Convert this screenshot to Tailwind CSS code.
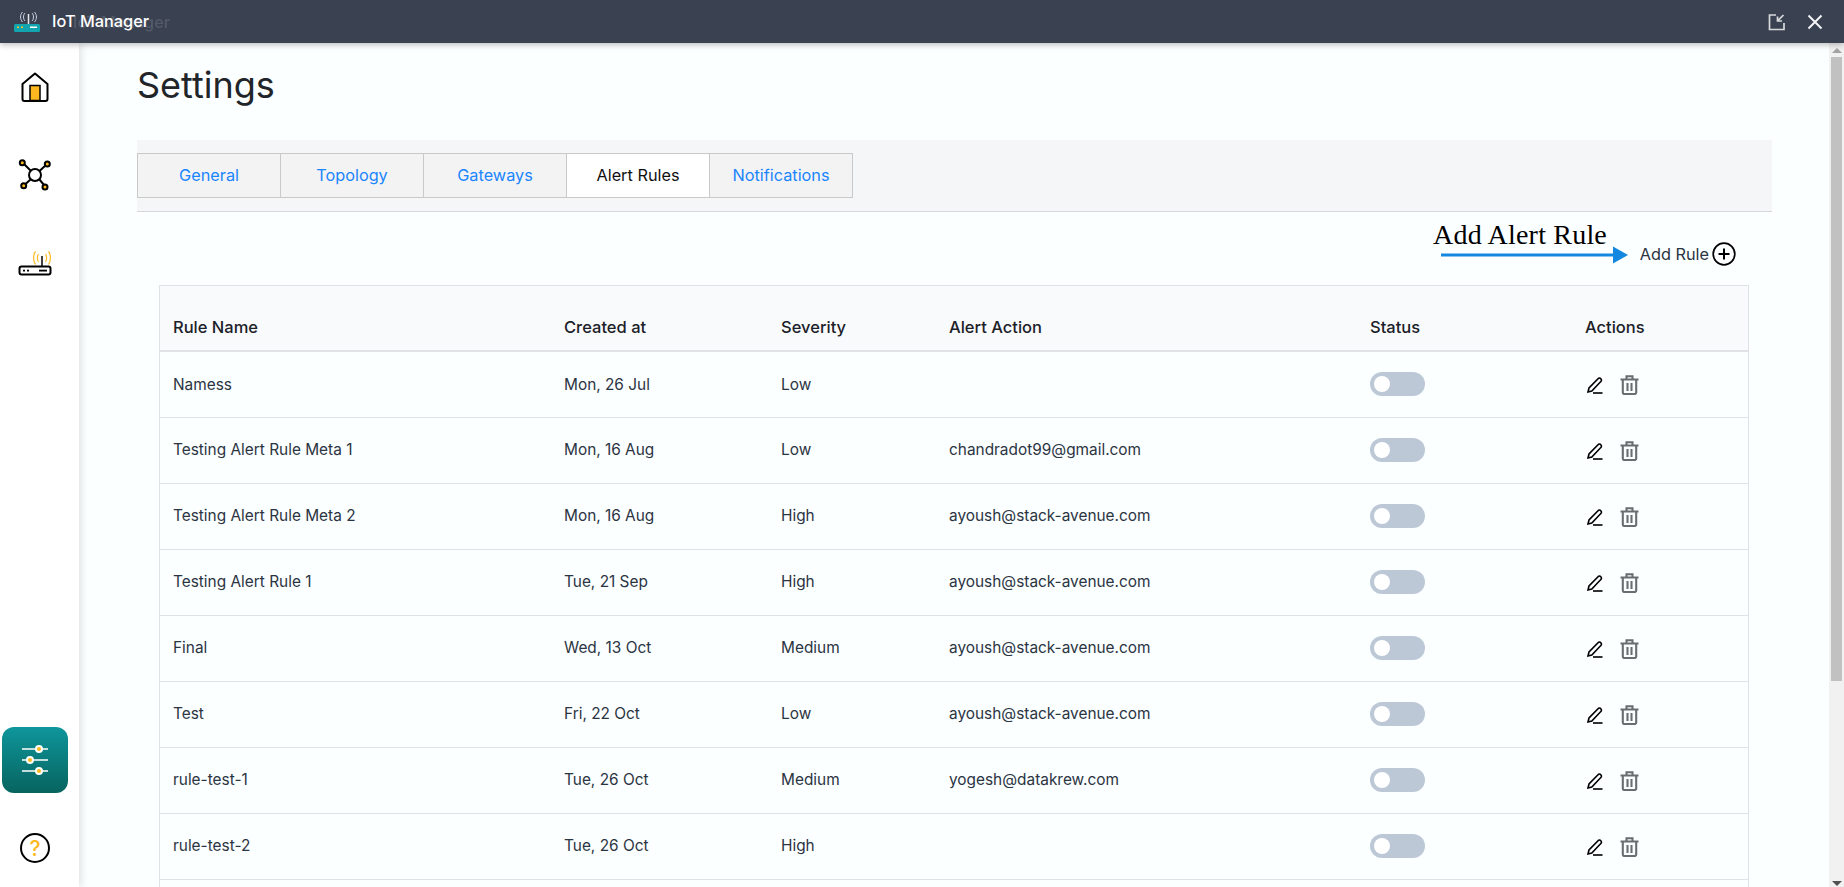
<!DOCTYPE html>
<html lang="en">
<head>
  <meta charset="UTF-8">
  <title>IoT Manager</title>
  <script src="https://cdn.jsdelivr.net/npm/@tailwindcss/browser@4"></script>
</head>
<body class="h-[887px] overflow-hidden bg-[#fbffff] font-['Inter',sans-serif]">
  <!-- Title bar -->
  <header class="relative z-20 flex h-[43px] items-center justify-between bg-[#3a4150] pl-[13px] pr-[20px] shadow-[0_2px_6px_rgba(0,0,0,0.25)]">
    <div class="relative flex items-center gap-[11px]">
      <svg width="28" height="22" viewBox="0 0 28 22" fill="none">
        <path d="M12 2c-2 2-2 6 0 8M9.500 1c-2.600 3-2.600 7 0 10M19 2c2 2 2 6 0 8M21.500 1c2.600 3 2.600 7 0 10" stroke="#cbd5e1" stroke-width="1"/>
        <path d="M15.500 3v11" stroke="#e5e7eb" stroke-width="1.500"/>
        <rect x="1" y="13" width="26" height="8" rx="1.500" fill="#12a5b0"/>
        <rect x="4" y="15.500" width="2" height="1.500" fill="#fbbf24"/>
        <rect x="8" y="15.500" width="2" height="1.500" fill="#fbbf24"/>
        <rect x="17" y="15.500" width="7" height="1.500" fill="#fff"/>
      </svg>
      <span class="absolute left-[60px] top-[1px] whitespace-nowrap text-[16.3px] font-medium text-[#535a68] blur-[0.5px]">IoT Manager</span>
      <span class="relative text-[16.3px] font-medium text-white">IoT Manager</span>
    </div>
    <div class="flex items-center gap-[19px]">
      <svg width="20" height="20" viewBox="0 0 20 20" fill="none" stroke="#d8dadc" stroke-width="1.700">
        <path d="M9 3H2.500v14.500H17V11"/>
        <path d="M16.500 3 10.500 9M10.500 4.500V9H15"/>
      </svg>
      <svg width="18" height="18" viewBox="0 0 18 18" fill="none" stroke="#f3f4f6" stroke-width="2">
        <path d="M2.500 2.500 15.500 15.500M15.500 2.500 2.500 15.500"/>
      </svg>
    </div>
  </header>

  <div class="flex h-[844px]">
    <!-- Sidebar -->
    <aside class="z-10 flex w-[79px] shrink-0 flex-col items-center bg-white pr-[9px] shadow-[2px_0_8px_rgba(0,0,0,0.12)]">
      <svg class="mt-[29px]" width="28" height="30" viewBox="0 0 28 30" fill="none">
        <path d="M1.500 12 14 1.500 26.500 12v15a2 2 0 0 1-2 2h-21a2 2 0 0 1-2-2z" stroke="#000" stroke-width="2" stroke-linejoin="round"/>
        <rect x="9" y="13.500" width="10" height="15" fill="#fbb91f" stroke="#000" stroke-width="1.500"/>
      </svg>
      <svg class="mt-[56px]" width="34" height="34" viewBox="0 0 34 34" fill="none" stroke="#000" stroke-width="2">
        <circle cx="17" cy="17" r="6"/>
        <path d="M12.500 12.500 6 6M21.500 13 28 7M12.500 21.500 7 26.500M21.500 21.500 26 27"/>
        <circle cx="4.300" cy="4.700" r="2.500" fill="#fbb91f"/>
        <circle cx="29.300" cy="6" r="2.500" fill="#fbb91f"/>
        <circle cx="5.700" cy="27.700" r="2.500" fill="#fbb91f"/>
        <circle cx="27" cy="29" r="2.500" fill="#fbb91f"/>
      </svg>
      <svg class="mt-[58px]" width="34" height="26" viewBox="0 0 34 26" fill="none">
        <path d="M20.500 4c-1.500 2-1.500 6 0 8M17.500 1.500c-2.500 3-2.500 10 0 13M27.500 4c1.500 2 1.500 6 0 8M30.500 1.500c2.500 3 2.500 10 0 13" stroke="#fbb91f" stroke-width="1.200"/>
        <path d="M24 6v11" stroke="#000" stroke-width="1.500"/>
        <rect x="1.500" y="16.500" width="31" height="8" rx="2" fill="#fff" stroke="#000" stroke-width="2"/>
        <rect x="5" y="19.700" width="2" height="1.800" fill="#000"/>
        <rect x="9" y="19.700" width="2" height="1.800" fill="#000"/>
        <rect x="21" y="19.700" width="8" height="1.800" fill="#000"/>
      </svg>
      <div class="mt-auto flex h-[66px] w-[66px] items-center justify-center rounded-[12px] bg-gradient-to-b from-[#0f969c] to-[#07645f]">
        <svg width="28" height="30" viewBox="0 0 28 30" fill="none">
          <path d="M1 4h26M1 15h26M1 26h26" stroke="#fff" stroke-width="1.500"/>
          <circle cx="18" cy="4" r="3" fill="#fbb91f" stroke="#fff" stroke-width="2"/>
          <circle cx="9" cy="15" r="3" fill="#fbb91f" stroke="#fff" stroke-width="2"/>
          <circle cx="18" cy="26" r="3" fill="#fbb91f" stroke="#fff" stroke-width="2"/>
        </svg>
      </div>
      <div class="mt-[40px] mb-[24px] flex h-[30px] w-[30px] items-center justify-center rounded-full border-2 border-black text-[21px] font-medium leading-none text-[#fbb91f]">?</div>
    </aside>

    <!-- Main -->
    <main class="min-w-0 flex-1 overflow-hidden pl-[58px] pr-[57px]">
      <h1 class="mt-[19px] h-[47px] text-[36px] leading-[47px] font-normal text-[#212529]">Settings</h1>

      <div class="mt-[31px] flex h-[72px] items-start border-b border-[#d5d8da] bg-[#f4f6f7] pt-[13px]">
        <nav class="flex h-[45px] border border-[#c9c9c9] text-[16.3px]">
          <a class="flex w-[143px] items-center justify-center border-r border-[#c9c9c9] bg-[#f3f3f3] text-[#1a85ff]">General</a>
          <a class="flex w-[143px] items-center justify-center border-r border-[#c9c9c9] bg-[#f3f3f3] text-[#1a85ff]">Topology</a>
          <a class="flex w-[143px] items-center justify-center border-r border-[#c9c9c9] bg-[#f3f3f3] text-[#1a85ff]">Gateways</a>
          <a class="flex w-[143px] items-center justify-center border-r border-[#c9c9c9] bg-white text-[#111]">Alert Rules</a>
          <a class="flex w-[142px] items-center justify-center bg-[#f3f3f3] text-[#1a85ff]">Notifications</a>
        </nav>
      </div>

      <!-- Add rule -->
      <div class="relative flex h-[73px] items-start justify-end pr-[36px] pt-[30px]">
        <span class="absolute right-[165px] top-[7px] whitespace-nowrap font-['Liberation_Serif',serif] text-[28px] leading-[32px] tracking-[0.2px] text-black">Add Alert Rule</span>
        <svg class="absolute right-[142px] top-[34px]" width="190" height="18" viewBox="0 0 190 18">
          <path d="M1 9h175" stroke="#1488e0" stroke-width="3"/>
          <path d="M173 0.500l15 8.500-15 8.500z" fill="#1488e0"/>
        </svg>
        <span class="text-[16.3px] leading-[24px] text-[#2b3442]">Add Rule</span>
        <svg class="ml-[3px]" width="24" height="24" viewBox="0 0 24 24" fill="none" stroke="#000" stroke-width="1.700">
          <circle cx="12" cy="12" r="10.800"/>
          <path d="M12 6.500v11M6.500 12h11" stroke-width="2"/>
        </svg>
      </div>

      <!-- Rules table -->
      <div class="ml-[22px] mr-[23px] border border-[#e0e3e5]">
        <table class="w-full table-fixed border-collapse text-[15.4px] text-[#2b3442]">
          <colgroup>
            <col class="w-[391px]"><col class="w-[217px]"><col class="w-[168px]"><col class="w-[421px]"><col class="w-[215px]"><col>
          </colgroup>
          <thead class="bg-[#f8fafb] text-left text-[16.5px] text-[#1c2128]">
            <tr class="h-[65px] border-b-2 border-[#e0e3e5]">
              <th class="px-[13px] pt-[19px] font-medium">Rule Name</th>
              <th class="px-[13px] pt-[19px] font-medium">Created at</th>
              <th class="px-[13px] pt-[19px] font-medium">Severity</th>
              <th class="px-[13px] pt-[19px] font-medium">Alert Action</th>
              <th class="px-[13px] pt-[19px] font-medium">Status</th>
              <th class="px-[13px] pt-[19px] font-medium">Actions</th>
            </tr>
          </thead>
          <tbody id="rows"></tbody>
        </table>
      </div>
    </main>

    <!-- Scrollbar -->
    <div class="z-10 flex w-[15px] shrink-0 flex-col items-center bg-[#f1f1f1]">
      <div class="mt-[5px] h-0 w-0 border-x-[5px] border-b-[5px] border-x-transparent border-b-[#a3a3a3]"></div>
      <div class="mt-[4px] h-[624px] w-[11px] bg-[#c1c1c1]"></div>
      <div class="mt-auto mb-[1px] h-0 w-0 border-x-[5px] border-t-[5px] border-x-transparent border-t-[#505050]"></div>
    </div>
  </div>

  <script>
    const rules = [
      ['Namess', 'Mon, 26 Jul', 'Low', ''],
      ['Testing Alert Rule Meta 1', 'Mon, 16 Aug', 'Low', 'chandradot99@gmail.com'],
      ['Testing Alert Rule Meta 2', 'Mon, 16 Aug', 'High', 'ayoush@stack-avenue.com'],
      ['Testing Alert Rule 1', 'Tue, 21 Sep', 'High', 'ayoush@stack-avenue.com'],
      ['Final', 'Wed, 13 Oct', 'Medium', 'ayoush@stack-avenue.com'],
      ['Test', 'Fri, 22 Oct', 'Low', 'ayoush@stack-avenue.com'],
      ['rule-test-1', 'Tue, 26 Oct', 'Medium', 'yogesh@datakrew.com'],
      ['rule-test-2', 'Tue, 26 Oct', 'High', ''],
    ];

    const toggle = `<div class="flex h-[24px] w-[55px] items-center rounded-full bg-[#bdc8d7] px-[4px]"><div class="h-[16px] w-[16px] rounded-full bg-white"></div></div>`;
    const actions = `<div class="mt-[2px] flex items-center gap-[17px] pl-[2px]">
      <svg width="16" height="17" viewBox="0 0 16 17" fill="none" stroke="#000" stroke-width="1.600"><path d="M1 15l1-4L11 1.800a1.700 1.700 0 0 1 2.800 0 1.700 1.700 0 0 1 0 2.700L4.800 14z"/><path d="M6 16h9.500"/></svg>
      <svg width="19" height="20" viewBox="0 0 19 20" fill="none" stroke="#6a6d70" stroke-width="2.100"><path d="M0.500 4.500h18M6.500 4V1.200h6V4M2.800 5v12.500A1.500 1.500 0 0 0 4.300 19h10.400a1.500 1.500 0 0 0 1.500-1.500V5M7.500 8v8M11.500 8v8"/></svg>
    </div>`;

    document.getElementById('rows').innerHTML = rules.map((r) => `
      <tr class="h-[66px] border-b border-[#e0e3e5]">
        <td class="px-[13px]">${r[0]}</td>
        <td class="px-[13px]">${r[1]}</td>
        <td class="px-[13px]">${r[2]}</td>
        <td class="px-[13px]">${r[3]}</td>
        <td class="px-[13px]">${toggle}</td>
        <td class="px-[13px]">${actions}</td>
      </tr>`).join('') + '<tr class="h-[66px]"><td colspan="6"></td></tr>';
  </script>
</body>
</html>
